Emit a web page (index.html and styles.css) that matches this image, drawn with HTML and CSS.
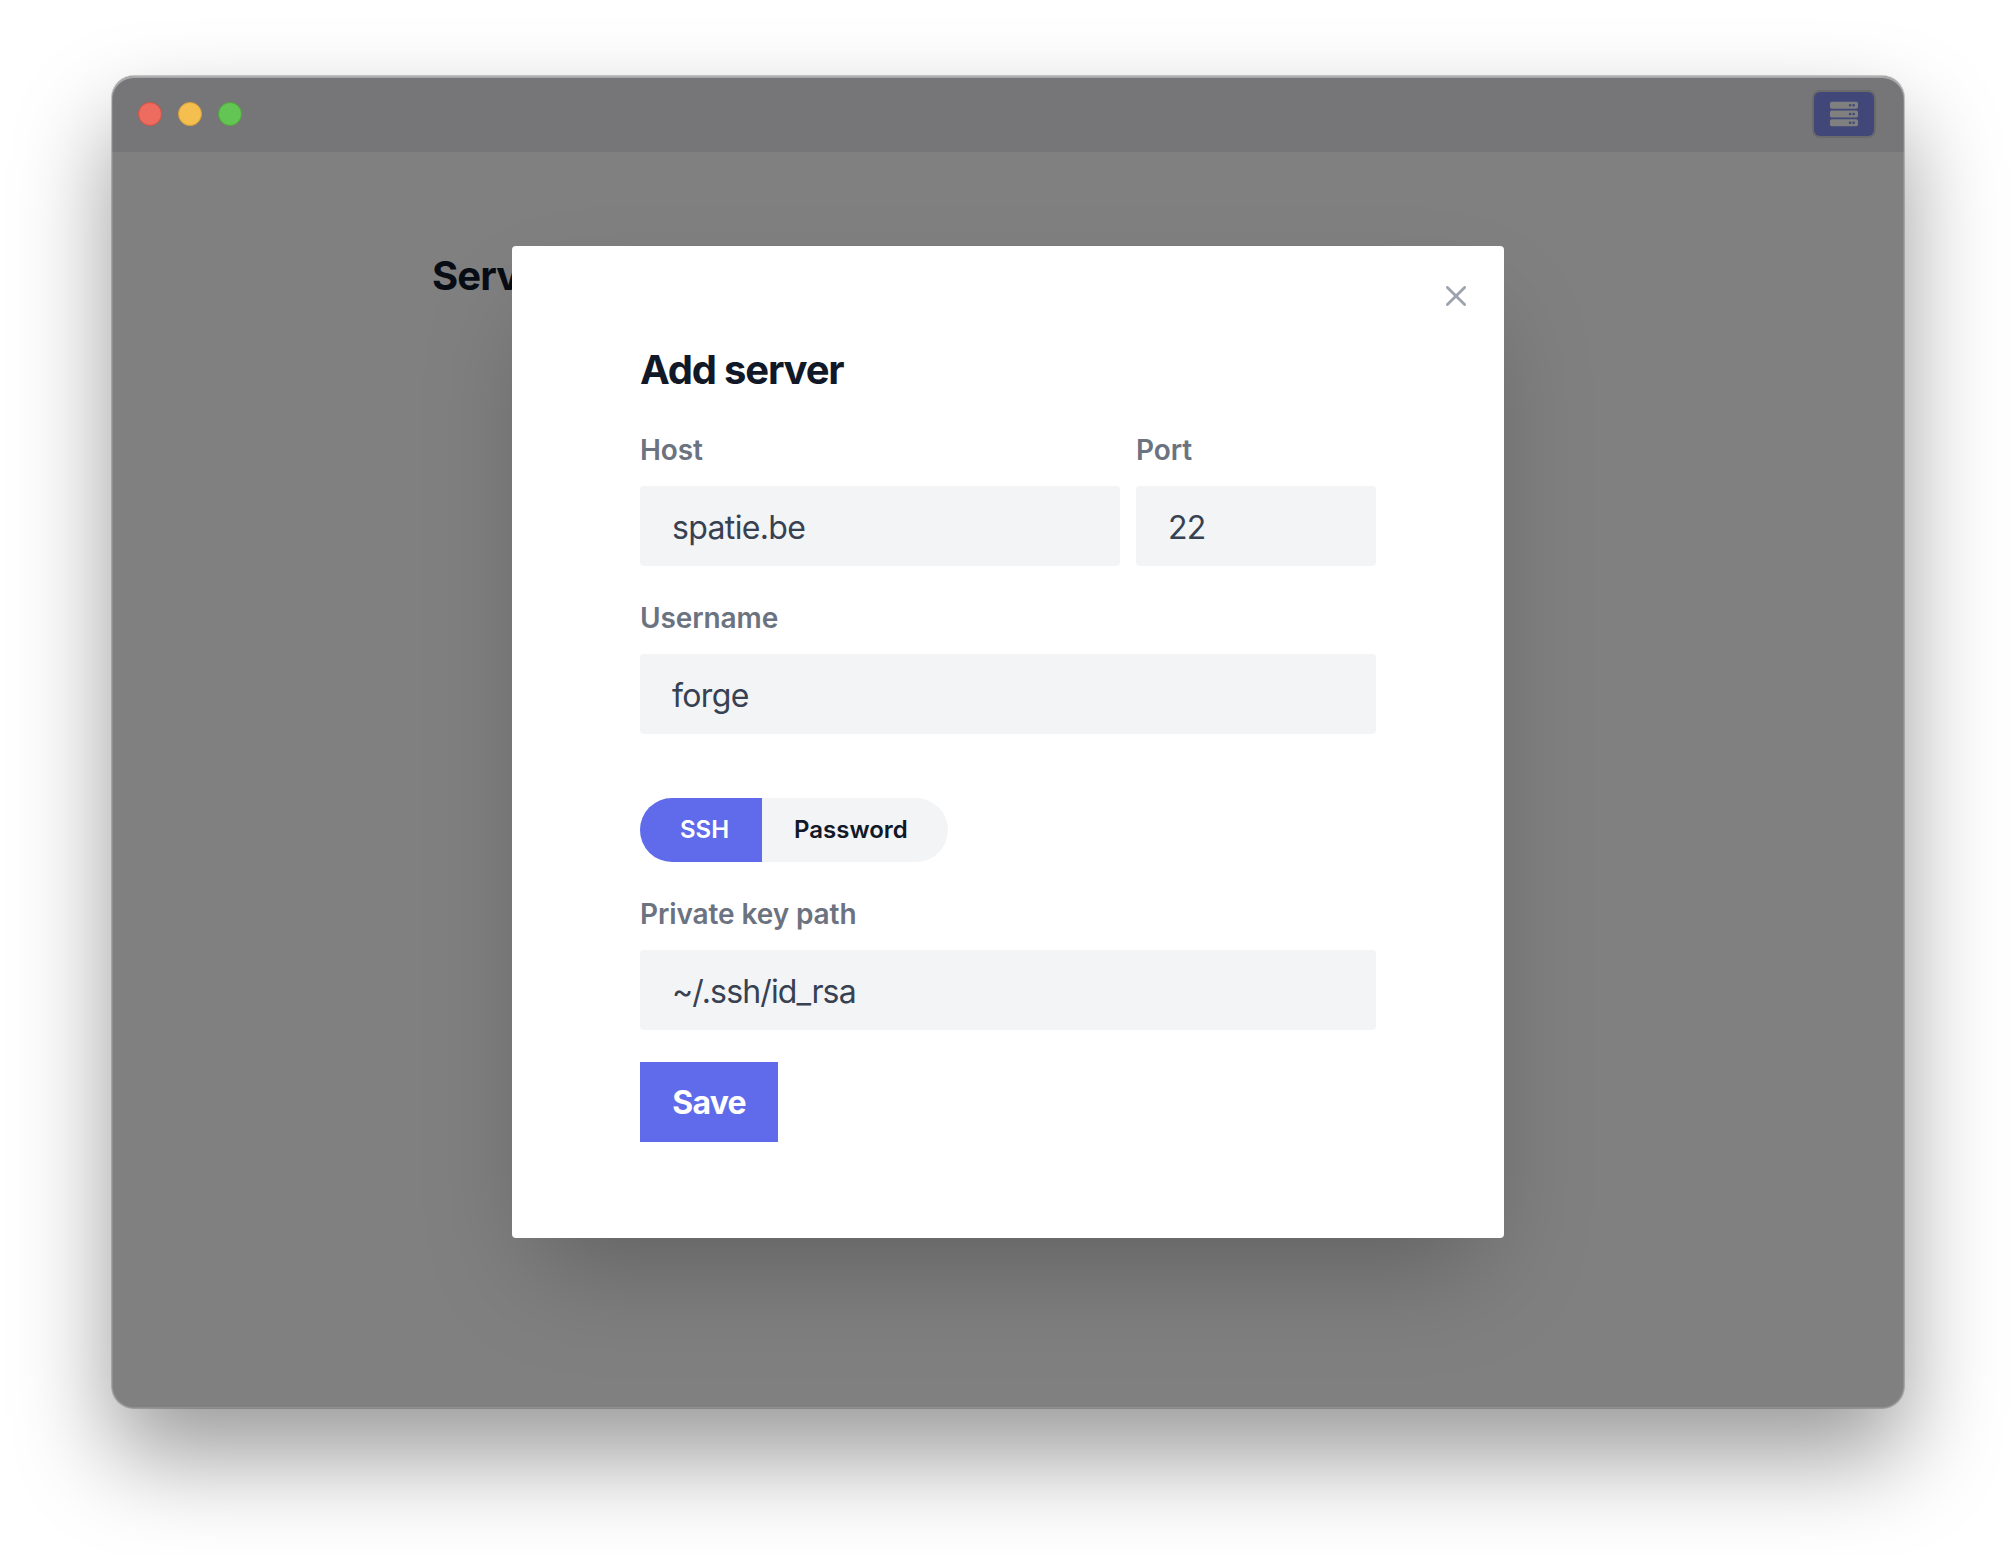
FILE: index.html
```html
<!DOCTYPE html>
<html lang="en">
<head>
<meta charset="utf-8">
<title>Servers</title>
<link rel="stylesheet" href="styles.css">
</head>
<body>
<div class="window">
  <header class="titlebar">
    <div class="lights">
      <span class="light light-close"></span>
      <span class="light light-minimize"></span>
      <span class="light light-zoom"></span>
    </div>
    <button class="servers-button" aria-label="Servers">
      <svg viewBox="0 0 512 512" width="28" height="28" fill="currentColor" fill-rule="evenodd"><path d="M480 160H32c-17.700 0-32-14.300-32-32V64c0-17.700 14.300-32 32-32h448c17.700 0 32 14.300 32 32v64c0 17.700-14.300 32-32 32zM432 72a24 24 0 1 0 0 48a24 24 0 1 0 0-48zM368 72a24 24 0 1 0 0 48a24 24 0 1 0 0-48zM480 320H32c-17.700 0-32-14.300-32-32v-64c0-17.700 14.300-32 32-32h448c17.700 0 32 14.300 32 32v64c0 17.700-14.300 32-32 32zM432 232a24 24 0 1 0 0 48a24 24 0 1 0 0-48zM368 232a24 24 0 1 0 0 48a24 24 0 1 0 0-48zM480 480H32c-17.700 0-32-14.300-32-32v-64c0-17.700 14.300-32 32-32h448c17.700 0 32 14.300 32 32v64c0 17.700-14.300 32-32 32zM432 392a24 24 0 1 0 0 48a24 24 0 1 0 0-48zM368 392a24 24 0 1 0 0 48a24 24 0 1 0 0-48z"/></svg>
    </button>
  </header>
  <main class="page">
    <h1 class="page-title">Serv</h1>
  </main>
  <div class="backdrop">
    <form class="modal">
      <button type="button" class="close" aria-label="Close">
        <svg viewBox="0 0 20 20" width="20" height="20" fill="none" stroke="currentColor" stroke-width="2.800" stroke-linecap="round"><path d="M1.400 1.400L18.600 18.600M18.600 1.400L1.400 18.600"/></svg>
      </button>
      <h2 class="modal-title">Add server</h2>
      <div class="row">
        <label class="field field-host"><span class="label">Host</span><span class="input">spatie.be</span></label>
        <label class="field field-port"><span class="label">Port</span><span class="input">22</span></label>
      </div>
      <label class="field"><span class="label">Username</span><span class="input">forge</span></label>
      <div class="toggle">
        <span class="option option-active">SSH</span>
        <span class="option">Password</span>
      </div>
      <label class="field"><span class="label">Private key path</span><span class="input input-key">~/.ssh/id_rsa</span></label>
      <button type="button" class="save">Save</button>
    </form>
  </div>
</div>
</body>
</html>
```
FILE: styles.css
```css
* { box-sizing: border-box; }

body {
  margin: 0;
  height: 1556px;
  padding: 76px 112px 0;
  overflow: hidden;
  background: #fff;
  font-family: Inter, "Liberation Sans", sans-serif;
  color: #111827;
}

button { border: 0; padding: 0; font-family: inherit; }
h1, h2 { margin: 0; }
svg { display: block; }

.window {
  position: relative;
  width: 1792px;
  height: 1332px;
  border-radius: 22px;
  background: #808080;
  box-shadow: 0 0 0 1px rgba(0, 0, 0, .2), 0 48px 96px rgba(0, 0, 0, .4);
}

.window::after {
  content: "";
  position: absolute;
  inset: 0;
  border-radius: 22px;
  pointer-events: none;
  box-shadow: inset 0 0 0 1px rgba(255, 255, 255, .12), inset 0 2px 0 rgba(255, 255, 255, .35);
}

.titlebar {
  display: flex;
  align-items: center;
  justify-content: space-between;
  height: 76px;
  padding: 0 30px 0 26px;
  border-radius: 22px 22px 0 0;
  background: #767678;
}

.lights { display: flex; gap: 16px; }
.light { width: 24px; height: 24px; border-radius: 50%; border: 1px solid; }
.light-close { background: #ed6b5f; border-color: #d5503f; }
.light-minimize { background: #f5bf4f; border-color: #d8a038; }
.light-zoom { background: #62c554; border-color: #4fa73a; }

.servers-button {
  display: flex;
  align-items: center;
  justify-content: center;
  width: 60px;
  height: 44px;
  border-radius: 6px;
  background: #424779;
  color: #808080;
  box-shadow: 0 0 0 2px rgba(0, 0, 0, .1);
}

.page { padding: 100px 320px; }
.page-title { font-size: 40px; line-height: 48px; font-weight: 660; letter-spacing: -.9px; color: #080c14; }

.backdrop {
  position: absolute;
  inset: 0;
  display: flex;
  justify-content: center;
  padding-top: 170px;
}

.modal {
  position: relative;
  display: flex;
  flex-direction: column;
  align-items: stretch;
  width: 992px;
  height: 992px;
  padding: 96px 128px;
  border-radius: 4px;
  background: #fff;
  box-shadow: 0 50px 100px -24px rgba(0, 0, 0, .25);
}

.close {
  position: absolute;
  top: 40px;
  right: 38px;
  background: none;
  color: #9ca3af;
}

.modal-title { font-size: 40px; line-height: 56px; font-weight: 660; letter-spacing: -1.2px; }

.row { display: flex; gap: 16px; margin-top: 32px; }
.field { display: flex; flex-direction: column; }
.field-host { width: 480px; }
.field-port { width: 240px; }
.row + .field { margin-top: 32px; }

.label { height: 56px; font-size: 28px; line-height: 41px; font-weight: 570; color: #6b7280; letter-spacing: -.1px; }
.input {
  height: 80px;
  padding: 0 32px;
  border-radius: 4px;
  background: #f3f4f6;
  color: #374151;
  font-size: 32px;
  line-height: 83px;
  letter-spacing: -.65px;
}
.input-key { letter-spacing: -.85px; }

.toggle {
  display: flex;
  width: 308px;
  height: 64px;
  margin: 64px 0 32px;
  border-radius: 32px;
  overflow: hidden;
  background: #f3f4f6;
}
.option { padding-left: 32px; font-size: 24px; line-height: 64px; font-weight: 570; }
.option-active { width: 122px; padding-left: 40px; background: #5f6beb; color: #fff; }

.save {
  width: 138px;
  height: 80px;
  margin-top: 32px;
  background: #5f6beb;
  color: #fff;
  font-size: 32px;
  line-height: 81px;
  font-weight: 660;
  letter-spacing: -.8px;
}
```
